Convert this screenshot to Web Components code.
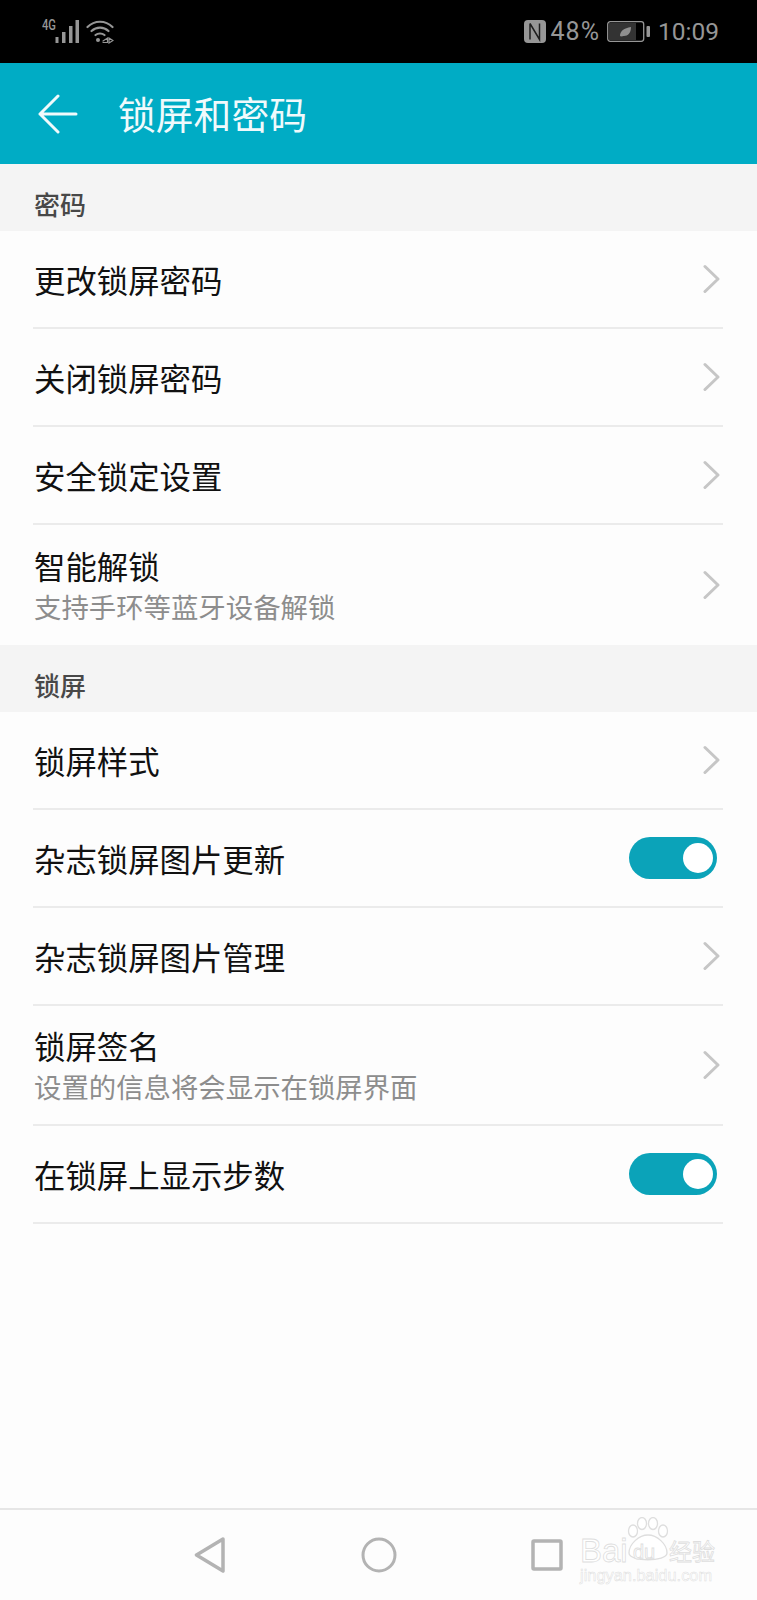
<!DOCTYPE html>
<html lang="zh">
<head>
<meta charset="utf-8">
<title>锁屏和密码</title>
<style>
  html, body { margin: 0; padding: 0; background: #fdfdfd; }
  body { width: 757px; height: 1600px; overflow: hidden; font-family: "Noto Sans CJK SC", "Noto Sans", sans-serif; }
  #app { display: flex; flex-direction: column; height: 1600px; }
</style>
</head>
<body>
<div id="app">
  <status-bar></status-bar>
  <app-bar>锁屏和密码</app-bar>
  <section-head>密码</section-head>
  <setting-row>更改锁屏密码</setting-row>
  <setting-row>关闭锁屏密码</setting-row>
  <setting-row>安全锁定设置</setting-row>
  <setting-row sub="支持手环等蓝牙设备解锁" last>智能解锁</setting-row>
  <section-head>锁屏</section-head>
  <setting-row>锁屏样式</setting-row>
  <setting-row toggle>杂志锁屏图片更新</setting-row>
  <setting-row>杂志锁屏图片管理</setting-row>
  <setting-row sub="设置的信息将会显示在锁屏界面">锁屏签名</setting-row>
  <setting-row toggle>在锁屏上显示步数</setting-row>
  <nav-bar></nav-bar>
</div>

<script>
// barra de estado negra
class StatusBar extends HTMLElement {
  constructor() {
    super();
    this.attachShadow({ mode: "open" });
    this.shadowRoot.innerHTML = `
      <style>
        :host { display: flex; flex: none; height: 63px; background: #000; color: #969696; align-items: center; justify-content: space-between; padding: 0 38px 0 42px; box-sizing: border-box; font-family: "Roboto", sans-serif; }
        .left, .right { display: flex; align-items: center; }
        .left { align-items: flex-start; height: 63px; padding-top: 20px; box-sizing: border-box; }
        .net { font-size: 14px; font-weight: 500; line-height: 11px; width: 13px; transform: scaleX(.8); transform-origin: left; white-space: nowrap; }
        .right { font-size: 24px; }
        svg { display: block; }
        .pct { margin: 0 7px 0 5px; font-size: 25px; letter-spacing: 1px; }
        .time { margin-left: 8px; font-size: 24.500px; }
      </style>
      <div class="left">
        <span class="net">4G</span>
        <svg width="25" height="23" viewBox="0 0 25 23" fill="#969696">
          <rect x="0.500" y="17" width="3" height="6"/><rect x="7" y="12" width="3.500" height="11"/>
          <rect x="14" y="6" width="3.500" height="17"/><rect x="20.500" y="0" width="3.500" height="23"/>
        </svg>
        <svg width="28" height="24" viewBox="0 0 28 24" style="margin-left:6px" fill="none" stroke="#969696" stroke-width="2.200" stroke-linecap="round">
          <path d="M1.500 7C8.500 0 19.500 0 26.500 7"/><path d="M5.500 11C10.500 6.500 17.500 6.500 22.500 11"/><path d="M9.500 15C12 13 16 13 18.500 15"/>
          <circle cx="12" cy="20" r="2" fill="#969696" stroke="none"/>
          <path d="M17 22.500h4.500v-4.500l-4.500 3M23 18l4 2.500-4 2.500z" stroke-width="1.200"/>
        </svg>
      </div>
      <div class="right">
        <svg width="22" height="23" viewBox="0 0 22 23">
          <rect x="0" y="0" width="22" height="23" rx="4" fill="#969696"/>
          <path d="M6 3.500V19.500M6 3.500L15.500 19.500V3.500" fill="none" stroke="#000" stroke-width="1.500" stroke-opacity=".8"/>
        </svg>
        <span class="pct">48%</span>
        <svg width="43" height="21" viewBox="0 0 43 21">
          <rect x="0.700" y="0.700" width="36" height="19.600" rx="2.500" fill="#000" stroke="#969696" stroke-width="1.300"/>
          <rect x="2" y="2" width="27" height="17" fill="#333"/>
          <rect x="39.500" y="5" width="3.500" height="11" rx="1" fill="#969696"/>
          <path d="M13 15c0-5 4-8 11-9 0 6-3 9-7 9-1 0-3 1-4 0z" fill="#8f8f8f"/>
        </svg>
        <span class="time">10:09</span>
      </div>`;
  }
}

class AppBar extends HTMLElement {
  constructor() {
    super();
    this.attachShadow({ mode: "open" });
    this.shadowRoot.innerHTML = `
      <style>
        :host { display: flex; flex: none; height: 101px; background: #00acc5; color: #f0fafc; align-items: center; padding-left: 38px; box-sizing: border-box; font-size: 37.800px; font-weight: 400; }
        svg { display: block; margin-right: 40px; }
        .title { padding-bottom: 2px; }
      </style>
      <svg width="40" height="40" viewBox="0 0 40 40" fill="none" stroke="#f0fafc" stroke-width="3" stroke-linecap="round" stroke-linejoin="round">
        <path d="M2 20H38M20 2L2 20L20 38"/>
      </svg>
      <div class="title"><slot></slot></div>`;
  }
}

class SectionHead extends HTMLElement {
  constructor() {
    super();
    this.attachShadow({ mode: "open" });
    this.shadowRoot.innerHTML = `
      <style>
        :host { display: flex; flex: none; height: 67px; background: #f4f4f4; color: #484848; align-items: flex-end; padding: 0 0 7px 34px; box-sizing: border-box; font-size: 26px; line-height: 40px; font-weight: 500; }
      </style>
      <slot></slot>`;
  }
}

// fila de ajustes: atributos sub, toggle, last
class SettingRow extends HTMLElement {
  connectedCallback() {
    if (this.shadowRoot) return;
    this.attachShadow({ mode: "open" });
    const sub = this.getAttribute("sub");
    const end = this.hasAttribute("toggle")
      ? `<div class="switch"><i></i></div>`
      : `<svg width="18" height="30" viewBox="0 0 18 30" fill="none" stroke="#c6c6c6" stroke-width="3" stroke-linecap="round" stroke-linejoin="round"><path d="M3 2.500L16 15L3 27.500"/></svg>`;
    this.shadowRoot.innerHTML = `
      <style>
        :host { display: block; flex: none; padding: 0 34px 0 33px; background: #fdfdfd; }
        .row { display: flex; align-items: center; justify-content: space-between; height: ${sub ? 120 : 98}px; border-bottom: ${this.hasAttribute("last") ? "0" : "2px solid #ebebeb"}; box-sizing: border-box; }
        .text { padding: ${sub ? "0 0 2px 1px" : "1px 0 0 1px"}; }
        .title { font-size: 31.400px; line-height: 40px; color: #111; }
        .sub { font-size: 27.400px; line-height: 34px; color: #8d8d8d; margin-top: 3px; }
        svg { display: block; margin-right: 3px; }
        .switch { width: 88px; height: 42px; border-radius: 21px; background: #0ba3b9; display: flex; align-items: center; justify-content: flex-end; padding-right: 4px; box-sizing: border-box; margin-right: 6px; }
        .switch i { width: 30px; height: 30px; border-radius: 50%; background: #fff; }
      </style>
      <div class="row">
        <div class="text">
          <div class="title"><slot></slot></div>
          ${sub ? `<div class="sub">${sub}</div>` : ""}
        </div>
        ${end}
      </div>`;
  }
}

class NavBar extends HTMLElement {
  constructor() {
    super();
    this.attachShadow({ mode: "open" });
    this.shadowRoot.innerHTML = `
      <style>
        :host { display: flex; flex: none; margin-top: auto; height: 90px; border-top: 2px solid #e6e6e6; background: #fdfdfd; align-items: center; padding-left: 194px; box-sizing: content-box; position: relative; }
        svg { display: block; }
        /* marca de agua encima de la barra */
        .mark { position: absolute; left: 580px; top: 0; width: 140px; height: 90px; color: #fff; font-family: "Liberation Sans", sans-serif; -webkit-text-stroke: .8px #dedede; }
        .brand { position: absolute; left: 0; top: 27px; font-size: 33px; line-height: 28px; white-space: nowrap; }
        .du { position: absolute; left: 53px; top: 31px; font-size: 20px; line-height: 22px; }
        .cn { position: absolute; left: 89px; top: 27px; font-family: "Noto Sans CJK SC", sans-serif; font-size: 23px; line-height: 26px; white-space: nowrap; }
        .url { position: absolute; left: 0; top: 57px; font-size: 16.400px; line-height: 16px; white-space: nowrap; -webkit-text-stroke: .5px #dedede; }
        .paw { position: absolute; left: 46px; top: 7px; }
      </style>
      <svg width="32" height="36" viewBox="0 0 32 36" fill="none" stroke="#b3b3b3" stroke-width="3.500" stroke-linejoin="round"><path d="M29 2L2.500 18L29 34Z"/></svg>
      <svg width="36" height="36" viewBox="0 0 36 36" style="margin-left:135px" fill="none" stroke="#b3b3b3" stroke-width="3"><circle cx="18" cy="18" r="16"/></svg>
      <svg width="32" height="32" viewBox="0 0 32 32" style="margin-left:134px" fill="none" stroke="#b3b3b3" stroke-width="3.500" stroke-linejoin="round"><rect x="2" y="2" width="28" height="28" rx="1"/></svg>
      <div class="mark">
        <svg class="paw" width="44" height="46" viewBox="0 0 44 46" fill="#fff" stroke="#dedede" stroke-width="1.300">
          <ellipse cx="16" cy="6.500" rx="4.500" ry="6"/><ellipse cx="27" cy="6.500" rx="4.500" ry="6"/>
          <ellipse cx="7" cy="14" rx="4.500" ry="6"/><ellipse cx="37" cy="14" rx="4.500" ry="6"/>
          <path d="M3 36c0-9 10-18 19-18s19 9 19 18c0 9-38 9-38 0z"/>
        </svg>
        <div class="brand">Bai</div>
        <div class="du">du</div>
        <div class="cn">经验</div>
        <div class="url">jingyan.baidu.com</div>
      </div>`;
  }
}

customElements.define("status-bar", StatusBar);
customElements.define("app-bar", AppBar);
customElements.define("section-head", SectionHead);
customElements.define("setting-row", SettingRow);
customElements.define("nav-bar", NavBar);
</script>
</body>
</html>
